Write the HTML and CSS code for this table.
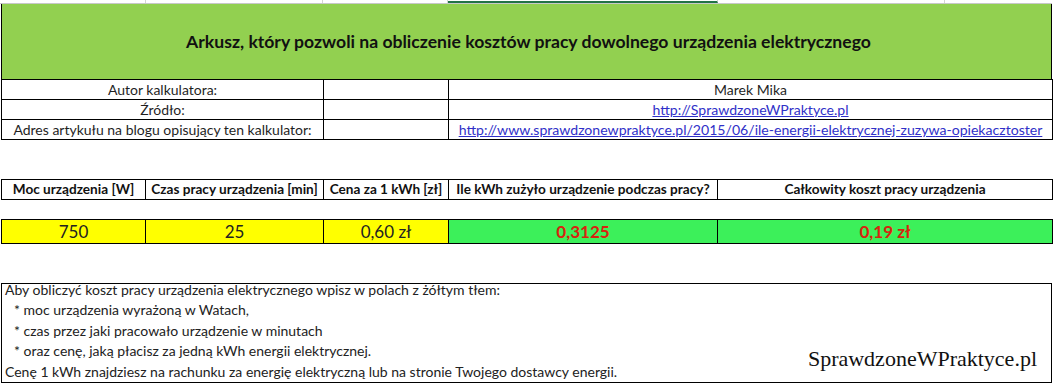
FILE: index.html
```html
<!DOCTYPE html>
<html lang="pl">
<head>
<meta charset="utf-8">
<title>Kalkulator kosztów pracy urządzenia</title>
<link rel="stylesheet" href="styles.css">
</head>
<body>
<div class="sheet">
  <div class="grid-strip">
    <span class="gc gc-a"></span>
    <span class="gc gc-b"></span>
    <span class="gc gc-c"></span>
    <span class="gc gc-d sel"></span>
    <span class="gc gc-e"></span>
    <span class="gc gc-f"></span>
  </div>

  <div class="title">Arkusz, który pozwoli na obliczenie kosztów pracy dowolnego urządzenia elektrycznego</div>

  <table class="info">
    <colgroup><col class="c-label"><col class="c-empty"><col class="c-value"></colgroup>
    <tr><td>Autor kalkulatora:</td><td></td><td>Marek Mika</td></tr>
    <tr><td>Źródło:</td><td></td><td><a href="#">http://SprawdzoneWPraktyce.pl</a></td></tr>
    <tr><td>Adres artykułu na blogu opisujący ten kalkulator:</td><td></td><td><a href="#">http://www.sprawdzonewpraktyce.pl/2015/06/ile-energii-elektrycznej-zuzywa-opiekacztoster</a></td></tr>
  </table>

  <table class="calc head">
    <colgroup><col class="k1"><col class="k2"><col class="k3"><col class="k4"><col class="k5"></colgroup>
    <tr>
      <th>Moc urządzenia [W]</th>
      <th>Czas pracy urządzenia [min]</th>
      <th>Cena za 1 kWh [zł]</th>
      <th>Ile kWh zużyło urządzenie podczas pracy?</th>
      <th>Całkowity koszt pracy urządzenia</th>
    </tr>
  </table>

  <table class="calc data">
    <colgroup><col class="k1"><col class="k2"><col class="k3"><col class="k4"><col class="k5"></colgroup>
    <tr>
      <td class="in">750</td>
      <td class="in">25</td>
      <td class="in">0,60 zł</td>
      <td class="out">0,3125</td>
      <td class="out">0,19 zł</td>
    </tr>
  </table>

  <div class="note">
    <div class="note-text">
      <p>Aby obliczyć koszt pracy urządzenia elektrycznego wpisz w polach z żółtym tłem:</p>
      <p class="item">* moc urządzenia wyrażoną w Watach,</p>
      <p class="item">* czas przez jaki pracowało urządzenie w minutach</p>
      <p class="item">* oraz cenę, jaką płacisz za jedną kWh energii elektrycznej.</p>
      <p>Cenę 1 kWh znajdziesz na rachunku za energię elektryczną lub na stronie Twojego dostawcy energii.</p>
    </div>
    <div class="brand">SprawdzoneWPraktyce.pl</div>
  </div>
</div>
</body>
</html>
```

FILE: styles.css
```css
html, body {
  margin: 0;
  padding: 0;
  background: #ffffff;
}

body {
  font-family: Lato, "Open Sans", "Liberation Sans", sans-serif;
  color: #1f1f1f;
}

.sheet {
  width: 1051px;
  padding-left: 1px;
}

.grid-strip {
  display: flex;
  height: 3px;
  border-bottom: 1px solid #c8c8c8;
  margin-left: -1px;
}

.gc {
  display: block;
  height: 3px;
  border-right: 1px solid #d4d4d4;
}

.gc-a { width: 145px; }
.gc-b { width: 177px; }
.gc-c { width: 124px; }
.gc-d { width: 269px; }
.gc-e { width: 227px; }
.gc-f { width: 107px; border-right: 0; }

.gc.sel {
  border-bottom: 2px solid #217346;
  height: 1px;
}

.title {
  height: 75px;
  background: #92d050;
  border-left: 1px solid #000;
  border-right: 1px solid #000;
  display: flex;
  align-items: center;
  justify-content: center;
  font-weight: 700;
  font-size: 17.6px;
  color: #111;
  padding-left: 4px;
  box-sizing: border-box;
  width: 1051px;
}

table {
  border-collapse: collapse;
  table-layout: fixed;
  width: 1051px;
}

td, th {
  border: 1px solid #000;
  padding: 0;
  text-align: center;
  white-space: nowrap;
  overflow: hidden;
}

.info td {
  height: 19px;
  font-size: 14px;
  line-height: 19px;
}

.c-label { width: 322px; }
.c-empty { width: 125px; }
.c-value { width: 604px; }

.info a {
  color: #3030c8;
  text-decoration: underline;
  font-size: 14.1px;
}

.calc.head {
  margin-top: 39px;
}

.k1 { width: 144px; }
.k2 { width: 178px; }
.k3 { width: 125px; }
.k4 { width: 269px; }
.k5 { width: 335px; }

.calc th {
  height: 19px;
  font-size: 13.6px;
  font-weight: 700;
  line-height: 19px;
  color: #111;
}

.calc.data {
  margin-top: 19px;
}

.calc td {
  height: 23px;
  font-size: 17px;
  line-height: 23px;
}

.calc td.in {
  background: #ffff00;
  color: #222;
}

.calc td.out {
  background: #3cf05a;
  color: #d9230f;
  font-weight: 700;
}

.note {
  margin-top: 39px;
  height: 100px;
  border: 1px solid #000;
  box-sizing: border-box;
  width: 1051px;
  display: flex;
  justify-content: space-between;
  align-items: flex-end;
}

.note-text {
  padding-left: 3px;
  font-size: 14px;
  color: #222;
}

.note-text p {
  margin: 0;
  height: 20.5px;
  line-height: 20.5px;
  white-space: nowrap;
}

.note-text p.item {
  padding-left: 9px;
}

.brand {
  font-family: "Liberation Serif", serif;
  font-size: 22px;
  color: #111;
  margin: 0 14px 10px 0;
}
```
